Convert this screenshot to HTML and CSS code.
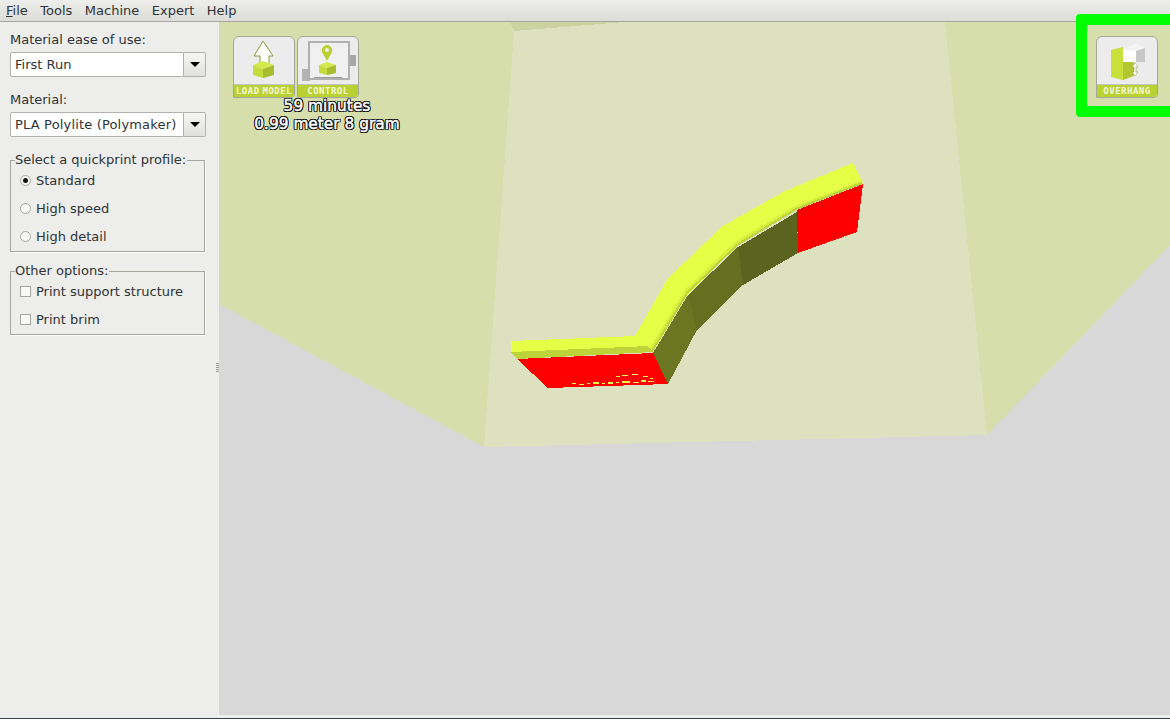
FILE: index.html
```html
<!DOCTYPE html>
<html lang="en">
<head>
    <meta charset="UTF-8">
    <title>Cura</title>
    <link rel="stylesheet" href="styles.css">
</head>
<body>

    <div class="menubar">
        <span class="menu-item"><u>F</u>ile</span>
        <span class="menu-item">Tools</span>
        <span class="menu-item">Machine</span>
        <span class="menu-item">Expert</span>
        <span class="menu-item">Help</span>
    </div>

    <div class="main">
        <div class="sidebar">
            <div class="field-label">Material ease of use:</div>
            <div class="combo">
                <div class="combo-value">First Run</div>
                <div class="combo-button"><span class="arrow"></span></div>
            </div>

            <div class="field-label second">Material:</div>
            <div class="combo">
                <div class="combo-value wide">PLA Polylite (Polymaker)</div>
                <div class="combo-button"><span class="arrow"></span></div>
            </div>

            <fieldset class="group profile">
                <legend>Select a quickprint profile:</legend>
                <div class="option"><span class="radio checked"></span>Standard</div>
                <div class="option"><span class="radio"></span>High speed</div>
                <div class="option"><span class="radio"></span>High detail</div>
            </fieldset>

            <fieldset class="group extras">
                <legend>Other options:</legend>
                <div class="option"><span class="check"></span>Print support structure</div>
                <div class="option"><span class="check"></span>Print brim</div>
            </fieldset>

            <div class="grip"></div>
        </div>

        <div class="viewport">
            <svg class="scene" viewBox="219 22 951 693" width="951" height="693" shape-rendering="crispEdges">
                <!-- build platform -->
                <polygon points="219,22 1170,22 1170,245 987,435 484,447 219,304" fill="#d6dfab"/>
                <polygon points="510,22 625,22 514,31" fill="#cbd4a0"/>
                <polygon points="514,31 625,22 945,22 987,435 484,447" fill="#dde1bf"/>

                <!-- model -->
                <polygon points="511,341 635,336 668,278 723,226 785,191 853,163 863,183 797,209 738,245 688,294 653,352 517,359 511,352" fill="#e4ff45"/>
                <polygon points="511,352 648,346 653,352 517,359" fill="#bcd43a"/>
                <polyline points="651,349 686,291 736,243 796,207 862,182" fill="none" stroke="#d6f040" stroke-width="3"/>
                <polyline points="652,351 687,293 737,245 796,209 862,183" fill="none" stroke="#bcd43a" stroke-width="2"/>
                <polygon points="517,359 653,353 668,384 548,388" fill="#ff0000"/>
                <polygon points="653,353 688,295 697,330 668,384" fill="#6b7622"/>
                <polygon points="688,295 738,247 743,285 697,330" fill="#656f20"/>
                <polygon points="738,247 797,212 798,253 743,285" fill="#5a641e"/>
                <polygon points="797,210 863,184 857,232 798,253" fill="#ff0000"/>

                <!-- stray bits of the top layer showing through -->
                <g fill="#e4ff45">
                    <rect x="616" y="376" width="4" height="1"/>
                    <rect x="622" y="375" width="6" height="1"/>
                    <rect x="632" y="374" width="6" height="1"/>
                    <rect x="643" y="376" width="5" height="1"/>
                    <rect x="650" y="378" width="3" height="1"/>
                    <rect x="572" y="383" width="4" height="1"/>
                    <rect x="579" y="384" width="5" height="1"/>
                    <rect x="587" y="383" width="3" height="1"/>
                    <rect x="593" y="382" width="6" height="2"/>
                    <rect x="602" y="383" width="3" height="1"/>
                    <rect x="608" y="382" width="5" height="2"/>
                    <rect x="616" y="382" width="3" height="1"/>
                    <rect x="622" y="381" width="8" height="2"/>
                    <rect x="633" y="382" width="6" height="1"/>
                    <rect x="641" y="380" width="5" height="2"/>
                    <rect x="648" y="381" width="6" height="1"/>
                </g>
            </svg>

            <div class="toolbar">
                <div class="tool-button">
                    <svg class="tool-art" viewBox="1 1 60 48" width="60" height="48">
                        <polygon points="30,5 40,20 36,20 36,28 27,28 27,20 21,20" fill="#fff" stroke="#8c9a3a" stroke-width="1"/>
                        <polygon points="30,25 41,29 30,33 20,29" fill="#d4ea4c"/>
                        <polygon points="20,29 30,33 30,42 20,39" fill="#c4dc3c"/>
                        <polygon points="41,29 30,33 30,42 41,39" fill="#a6bd30"/>
                    </svg>
                    <div class="tool-label">LOAD MODEL</div>
                </div>
                <div class="tool-button">
                    <svg class="tool-art" viewBox="1 1 60 48" width="60" height="48">
                        <rect x="5" y="33" width="8" height="12" fill="#b4b4b4"/>
                        <rect x="52" y="19" width="7" height="11" fill="#a8a8a8"/>
                        <rect x="12" y="6" width="40" height="37" fill="#f0f0f0" stroke="#b0b0b0" stroke-width="2"/>
                        <path d="M30 25 L25.500 17 A5.200 5.200 0 1 1 34.500 17 Z" fill="#b9d133"/>
                        <circle cx="30" cy="14" r="2" fill="#f0f0f0"/>
                        <polygon points="30,26 39,29 30,32 22,29" fill="#d4ea4c"/>
                        <polygon points="22,29 30,32 30,39 22,37" fill="#c4dc3c"/>
                        <polygon points="39,29 30,32 30,39 39,37" fill="#a6bd30"/>
                        <rect x="17" y="41" width="28" height="1" fill="#9a9a9a"/>
                    </svg>
                    <div class="tool-label">CONTROL</div>
                </div>
            </div>

            <div class="print-info">
                <div>59 minutes</div>
                <div>0.99 meter 8 gram</div>
            </div>

            <div class="overhang-frame">
                <div class="tool-button">
                    <svg class="tool-art" viewBox="1 1 60 48" width="60" height="48">
                        <polygon points="15,14 27,11 27,44 15,41" fill="#c8e03c"/>
                        <polygon points="27,26 38,26 38,40 27,44" fill="#b0c732"/>
                        <polygon points="27,14 40,7 49,12 40,15" fill="#f4f4f4"/>
                        <polygon points="27,14 40,15 40,26 27,26" fill="#ffffff"/>
                        <polygon points="40,15 49,12 49,26 40,26" fill="#c8c8c8"/>
                        <path d="M39 27 L42 31 H40 V36 H42 L39 40 L36 36 H38 V31 H36 Z" fill="#fff" stroke="#8c9a3a" stroke-width="0.500"/>
                    </svg>
                    <div class="tool-label">OVERHANG</div>
                </div>
            </div>
        </div>
    </div>

    <div class="footer-line"></div>

</body>
</html>
```

FILE: styles.css
```css
body {
    font-family: "DejaVu Sans", sans-serif;
    font-size: 13px;
    color: #2e3436;
    background-color: #ededeb;
    margin: 0;
    padding: 0;
    height: 719px;
    overflow: hidden;
    display: flex;
    flex-direction: column;
}
.menubar {
    display: flex;
    gap: 12.5px;
    height: 21px;
    padding-left: 6px;
    align-items: center;
    background: linear-gradient(#eeeeec, #dcdcd8);
    border-bottom: 1px solid #a6a69f;
    flex-shrink: 0;
}
.main {
    display: flex;
    height: 693px;
    flex-shrink: 0;
}
.sidebar {
    position: relative;
    width: 199px;
    padding: 10px 10px 0 10px;
    flex-shrink: 0;
}
.field-label {
    line-height: 16px;
    margin-bottom: 4px;
}
.field-label.second {
    margin-top: 15px;
}
.combo {
    display: flex;
    width: 196px;
    height: 25px;
}
.combo-value {
    flex: 1;
    line-height: 23px;
    padding-left: 4px;
    background: #fff;
    border: 1px solid #b2b2ac;
    border-radius: 2px 0 0 2px;
    white-space: nowrap;
    overflow: hidden;
}
.combo-value.wide {
    letter-spacing: 0.17px;
}
.combo-button {
    width: 21px;
    display: flex;
    align-items: center;
    justify-content: center;
    background: linear-gradient(#f6f6f4, #e0e0dc);
    border: 1px solid #b2b2ac;
    border-left: 0;
    border-radius: 0 2px 2px 0;
}
.arrow {
    width: 0;
    height: 0;
    border-left: 5px solid transparent;
    border-right: 5px solid transparent;
    border-top: 5px solid #000;
}
.group {
    box-sizing: border-box;
    width: 195px;
    margin: 0;
    padding: 0 0 0 9px;
    border: 1px solid #a6a69f;
    box-shadow: 1px 1px 0 #fff;
}
.group legend {
    padding: 0 1px 0 0;
    margin-left: -5px;
    line-height: 16px;
}
.profile {
    margin-top: 15px;
    height: 100px;
}
.extras {
    margin-top: 11px;
    height: 72px;
}
.option {
    display: flex;
    align-items: center;
    height: 28px;
    gap: 5px;
}
.option:first-of-type {
    margin-top: -2px;
}
.radio {
    width: 9px;
    height: 9px;
    border: 1px solid #a6a69f;
    border-radius: 50%;
    background: #f8f8f7;
    position: relative;
}
.radio.checked::after {
    content: "";
    position: absolute;
    left: 2px;
    top: 2px;
    width: 5px;
    height: 5px;
    border-radius: 50%;
    background: #111;
}
.check {
    width: 9px;
    height: 9px;
    border: 1px solid #a6a69f;
    background: #f8f8f7;
}
.grip {
    position: absolute;
    left: 216px;
    top: 341px;
    width: 3px;
    height: 10px;
    background: repeating-linear-gradient(#9a9a96 0, #9a9a96 1px, transparent 1px, transparent 2px);
}
.viewport {
    position: relative;
    flex: 1;
    background: #d8d8d8;
}
.scene {
    display: block;
}
.toolbar {
    position: absolute;
    left: 14px;
    top: 14px;
    display: flex;
    gap: 2px;
}
.tool-button {
    position: relative;
    box-sizing: border-box;
    width: 62px;
    height: 62px;
    background: #ececec;
    border: 1px solid #a3a89a;
    border-radius: 6px 6px 4px 0;
    overflow: hidden;
}
.tool-art {
    display: block;
}
.tool-label {
    position: absolute;
    left: 0;
    right: 0;
    bottom: 0;
    height: 12px;
    line-height: 13px;
    text-align: center;
    font-family: "DejaVu Sans Mono", monospace;
    font-size: 9px;
    font-weight: bold;
    letter-spacing: 0.5px;
    word-spacing: -3px;
    white-space: nowrap;
    color: #f4f8d8;
    background: #b9d133;
    border-top: 1px solid #c4c4c4;
}
.print-info {
    position: absolute;
    left: 0;
    top: 75px;
    width: 216px;
    text-align: center;
    font-family: "DejaVu Sans", sans-serif;
    font-size: 15.400px;
    line-height: 18px;
    color: #fff;
    -webkit-text-stroke: 0.5px #fff;
    text-shadow: 1px 0 0 #000, -1px 0 0 #000, 0 1px 0 #000, 0 -1px 0 #000, 1px 1px 0 #000, -1px 1px 0 #000, 1px -1px 0 #000, -1px -1px 0 #000;
}
.overhang-frame {
    position: absolute;
    left: 857px;
    top: -8px;
    width: 120px;
    height: 70px;
    padding: 11px 0 0 9px;
    border: 11px solid #00ff00;
    border-radius: 4px;
}
.footer-line {
    flex: 1;
    position: relative;
}
.footer-line::after {
    content: "";
    position: absolute;
    left: 0;
    right: 0;
    bottom: 0;
    height: 1px;
    background: #3a4150;
}
```
